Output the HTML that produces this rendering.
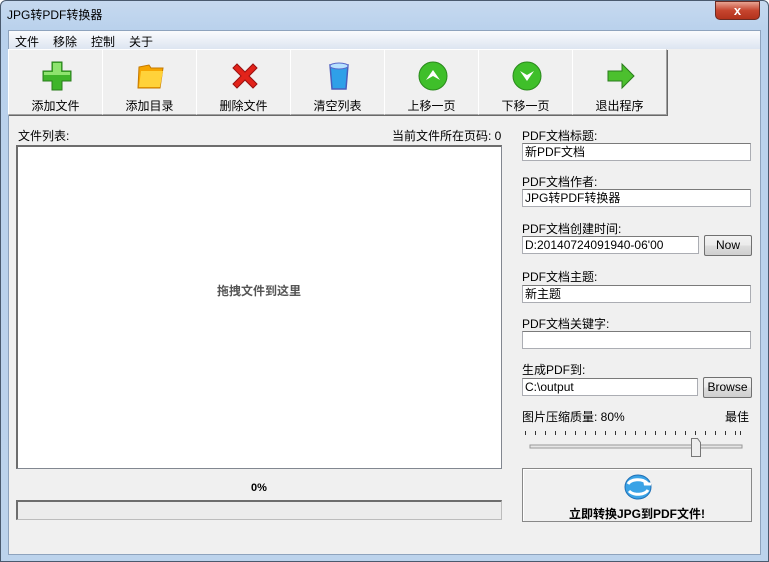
<!DOCTYPE html>
<html><head><meta charset="utf-8"><style>
*{margin:0;padding:0;box-sizing:border-box}
body{width:769px;height:562px;overflow:hidden;background:#fff;font-family:"Liberation Sans","Noto Sans CJK SC",sans-serif;font-size:12px;color:#000;position:relative}
.abs{position:absolute}
.win{left:0;top:0;width:769px;height:562px;border:1px solid #4a5a6e;border-radius:6px 6px 0 0;background:linear-gradient(#c6d9ef,#b9d1ec 30px,#bcd3ec)}
.client{left:8px;top:30px;width:753px;height:525px;background:#f0f0f0;border:1px solid #8ea3bd}
.title{left:7px;top:6px;font-size:12px}
.close{left:715px;top:1px;width:45px;height:19px;border-radius:0 0 5px 5px;background:linear-gradient(#e8a392,#c6452e 50%,#b2321c);border:1px solid #6d2b22;color:#fff;font-weight:bold;text-align:center;line-height:17px;font-size:13px}
.menu{left:9px;top:31px;width:751px;height:18px;background:linear-gradient(#fafbfd,#dde5f1)}
.menu span{position:absolute;top:2px}
.tb{top:49px;height:66px;width:95px;border:1px solid #a0a0a0;border-top-color:#fff;border-left-color:#fff;box-shadow:1px 1px 0 #696969;background:#f0f0f0;text-align:center}
.tb .lbl{position:absolute;left:0;right:0;top:47px}
.tb svg{position:absolute;left:31px;top:9px}
.lab{font-size:12px}
.inp{background:#fff;border:1px solid #abadb3;border-top-color:#7a7a7a;height:18px;padding-left:2px;line-height:16px}
.btn{border:1px solid #707070;border-radius:2px;background:linear-gradient(#f2f2f2,#ebebeb 50%,#dddddd 51%,#cfcfcf);text-align:center}
</style></head><body>
<div class="abs win"></div>
<div class="abs title">JPG转PDF转换器</div>
<div class="abs close">x</div>
<div class="abs client"></div>
<div class="abs menu"><span style="left:6px">文件</span><span style="left:44px">移除</span><span style="left:82px">控制</span><span style="left:120px">关于</span></div>

<div class="abs tb" style="left:8px"><svg width="34" height="34" viewBox="0 0 34 34"><path d="M12 3h10v9h9v10h-9v9H12v-9H3V12h9z" fill="#3fb52a" stroke="#2a7d1c"/><path d="M13 4h8v9h9v3H4v-3h9z" fill="#8ee36f"/></svg><div class="lbl">添加文件</div></div>
<div class="abs tb" style="left:102px"><svg width="34" height="34" viewBox="0 0 34 34"><path d="M5 8l10-2 2 3h12l-3 20H4z" fill="#f6a500" stroke="#c57a00"/><path d="M7 12h22l-3 16H5z" fill="#ffd23a"/></svg><div class="lbl">添加目录</div></div>
<div class="abs tb" style="left:196px"><svg width="34" height="34" viewBox="0 0 34 34"><path d="M5 9l4-4 8 8 8-8 4 4-8 8 8 8-4 4-8-8-8 8-4-4 8-8z" fill="#e2231a" stroke="#9a1010"/></svg><div class="lbl">删除文件</div></div>
<div class="abs tb" style="left:290px"><svg width="34" height="34" viewBox="0 0 34 34"><path d="M8 6h18l-2 24H10z" fill="#2fa0e8" stroke="#4a5dbb" stroke-width="1.5"/><ellipse cx="17" cy="7" rx="9" ry="3" fill="#b8e2ff" stroke="#5a6acb"/></svg><div class="lbl">清空列表</div></div>
<div class="abs tb" style="left:384px"><svg width="34" height="34" viewBox="0 0 34 34"><circle cx="17" cy="17" r="14" fill="#3fbf2a" stroke="#2a8a1c"/><path d="M10 21l7-10 7 10-7-4z" fill="#fff"/></svg><div class="lbl">上移一页</div></div>
<div class="abs tb" style="left:478px"><svg width="34" height="34" viewBox="0 0 34 34"><circle cx="17" cy="17" r="14" fill="#3fbf2a" stroke="#2a8a1c"/><path d="M10 12l7 10 7-10-7 4z" fill="#fff"/></svg><div class="lbl">下移一页</div></div>
<div class="abs tb" style="left:572px"><svg width="34" height="34" viewBox="0 0 34 34"><path d="M4 12h14V5l12 12-12 12v-7H4z" fill="#4cc02e" stroke="#2a7d1c"/></svg><div class="lbl">退出程序</div></div>

<div class="abs lab" style="left:18px;top:127px">文件列表:</div>
<div class="abs lab" style="left:392px;top:127px">当前文件所在页码: 0</div>
<div class="abs" style="left:16px;top:145px;width:486px;height:324px;background:#fff;border:1px solid #828790;border-top:2px solid #6d6d6d;border-left:2px solid #6d6d6d"></div>
<div class="abs" style="left:16px;top:282px;width:486px;text-align:center;font-weight:bold;color:#555">拖拽文件到这里</div>
<div class="abs" style="left:16px;top:482px;width:486px;text-align:center;font-weight:bold;font-size:11px">0%</div>
<div class="abs" style="left:16px;top:500px;width:486px;height:20px;border:1px solid #bcbcbc;border-top:2px solid #6d6d6d;border-left:2px solid #6d6d6d;background:#ececec"></div>

<div class="abs lab" style="left:522px;top:127px">PDF文档标题:</div>
<div class="abs inp" style="left:522px;top:143px;width:229px">新PDF文档</div>
<div class="abs lab" style="left:522px;top:173px">PDF文档作者:</div>
<div class="abs inp" style="left:522px;top:189px;width:229px">JPG转PDF转换器</div>
<div class="abs lab" style="left:522px;top:220px">PDF文档创建时间:</div>
<div class="abs inp" style="left:522px;top:236px;width:177px">D:20140724091940-06'00</div>
<div class="abs btn" style="left:704px;top:235px;width:48px;height:21px;line-height:19px">Now</div>
<div class="abs lab" style="left:522px;top:268px">PDF文档主题:</div>
<div class="abs inp" style="left:522px;top:285px;width:229px">新主题</div>
<div class="abs lab" style="left:522px;top:315px">PDF文档关键字:</div>
<div class="abs inp" style="left:522px;top:331px;width:229px"></div>
<div class="abs lab" style="left:522px;top:361px">生成PDF到:</div>
<div class="abs inp" style="left:522px;top:378px;width:176px">C:\output</div>
<div class="abs btn" style="left:703px;top:377px;width:49px;height:21px;line-height:19px">Browse</div>
<div class="abs lab" style="left:522px;top:408px">图片压缩质量: 80%</div>
<div class="abs lab" style="left:725px;top:408px">最佳</div>
<svg class="abs" style="left:520px;top:425px" width="230" height="40">
<g stroke="#333" stroke-width="1">
<line x1="5.5" y1="6" x2="5.5" y2="10"/><line x1="15.5" y1="6" x2="15.5" y2="10"/><line x1="25.5" y1="6" x2="25.5" y2="10"/><line x1="35.5" y1="6" x2="35.5" y2="10"/><line x1="45.5" y1="6" x2="45.5" y2="10"/><line x1="55.5" y1="6" x2="55.5" y2="10"/><line x1="65.5" y1="6" x2="65.5" y2="10"/><line x1="75.5" y1="6" x2="75.5" y2="10"/><line x1="85.5" y1="6" x2="85.5" y2="10"/><line x1="95.5" y1="6" x2="95.5" y2="10"/><line x1="105.5" y1="6" x2="105.5" y2="10"/><line x1="115.5" y1="6" x2="115.5" y2="10"/><line x1="125.5" y1="6" x2="125.5" y2="10"/><line x1="135.5" y1="6" x2="135.5" y2="10"/><line x1="145.5" y1="6" x2="145.5" y2="10"/><line x1="155.5" y1="6" x2="155.5" y2="10"/><line x1="165.5" y1="6" x2="165.5" y2="10"/><line x1="175.5" y1="6" x2="175.5" y2="10"/><line x1="185.5" y1="6" x2="185.5" y2="10"/><line x1="195.5" y1="6" x2="195.5" y2="10"/><line x1="205.5" y1="6" x2="205.5" y2="10"/><line x1="215.5" y1="6" x2="215.5" y2="10"/><line x1="220.5" y1="6" x2="220.5" y2="10"/></g>
<rect x="10" y="20" width="212" height="3" fill="#e6e6e6" stroke="#999"/>
<path d="M171.5 13.5h6l3 4v14h-9z" fill="#eee" stroke="#777"/>
</svg>
<div class="abs btn" style="left:522px;top:468px;width:230px;height:54px;border-radius:0;border-color:#888;background:#f0f0f0;box-shadow:inset 1px 1px 0 #fff"></div>
<svg class="abs" style="left:622px;top:472px" width="32" height="30" viewBox="0 0 32 30"><ellipse cx="16" cy="15" rx="13" ry="12" fill="#3aa3e6" stroke="#1f6fb5"/><path d="M6 12c3-5 14-6 19-1l-3 1h7" stroke="#fff" stroke-width="3" fill="none"/><path d="M26 18c-3 5-14 6-19 1" stroke="#fff" stroke-width="3" fill="none"/></svg>
<div class="abs" style="left:522px;top:505px;width:230px;text-align:center;font-weight:bold;font-size:12px">立即转换JPG到PDF文件!</div>
</body></html>
